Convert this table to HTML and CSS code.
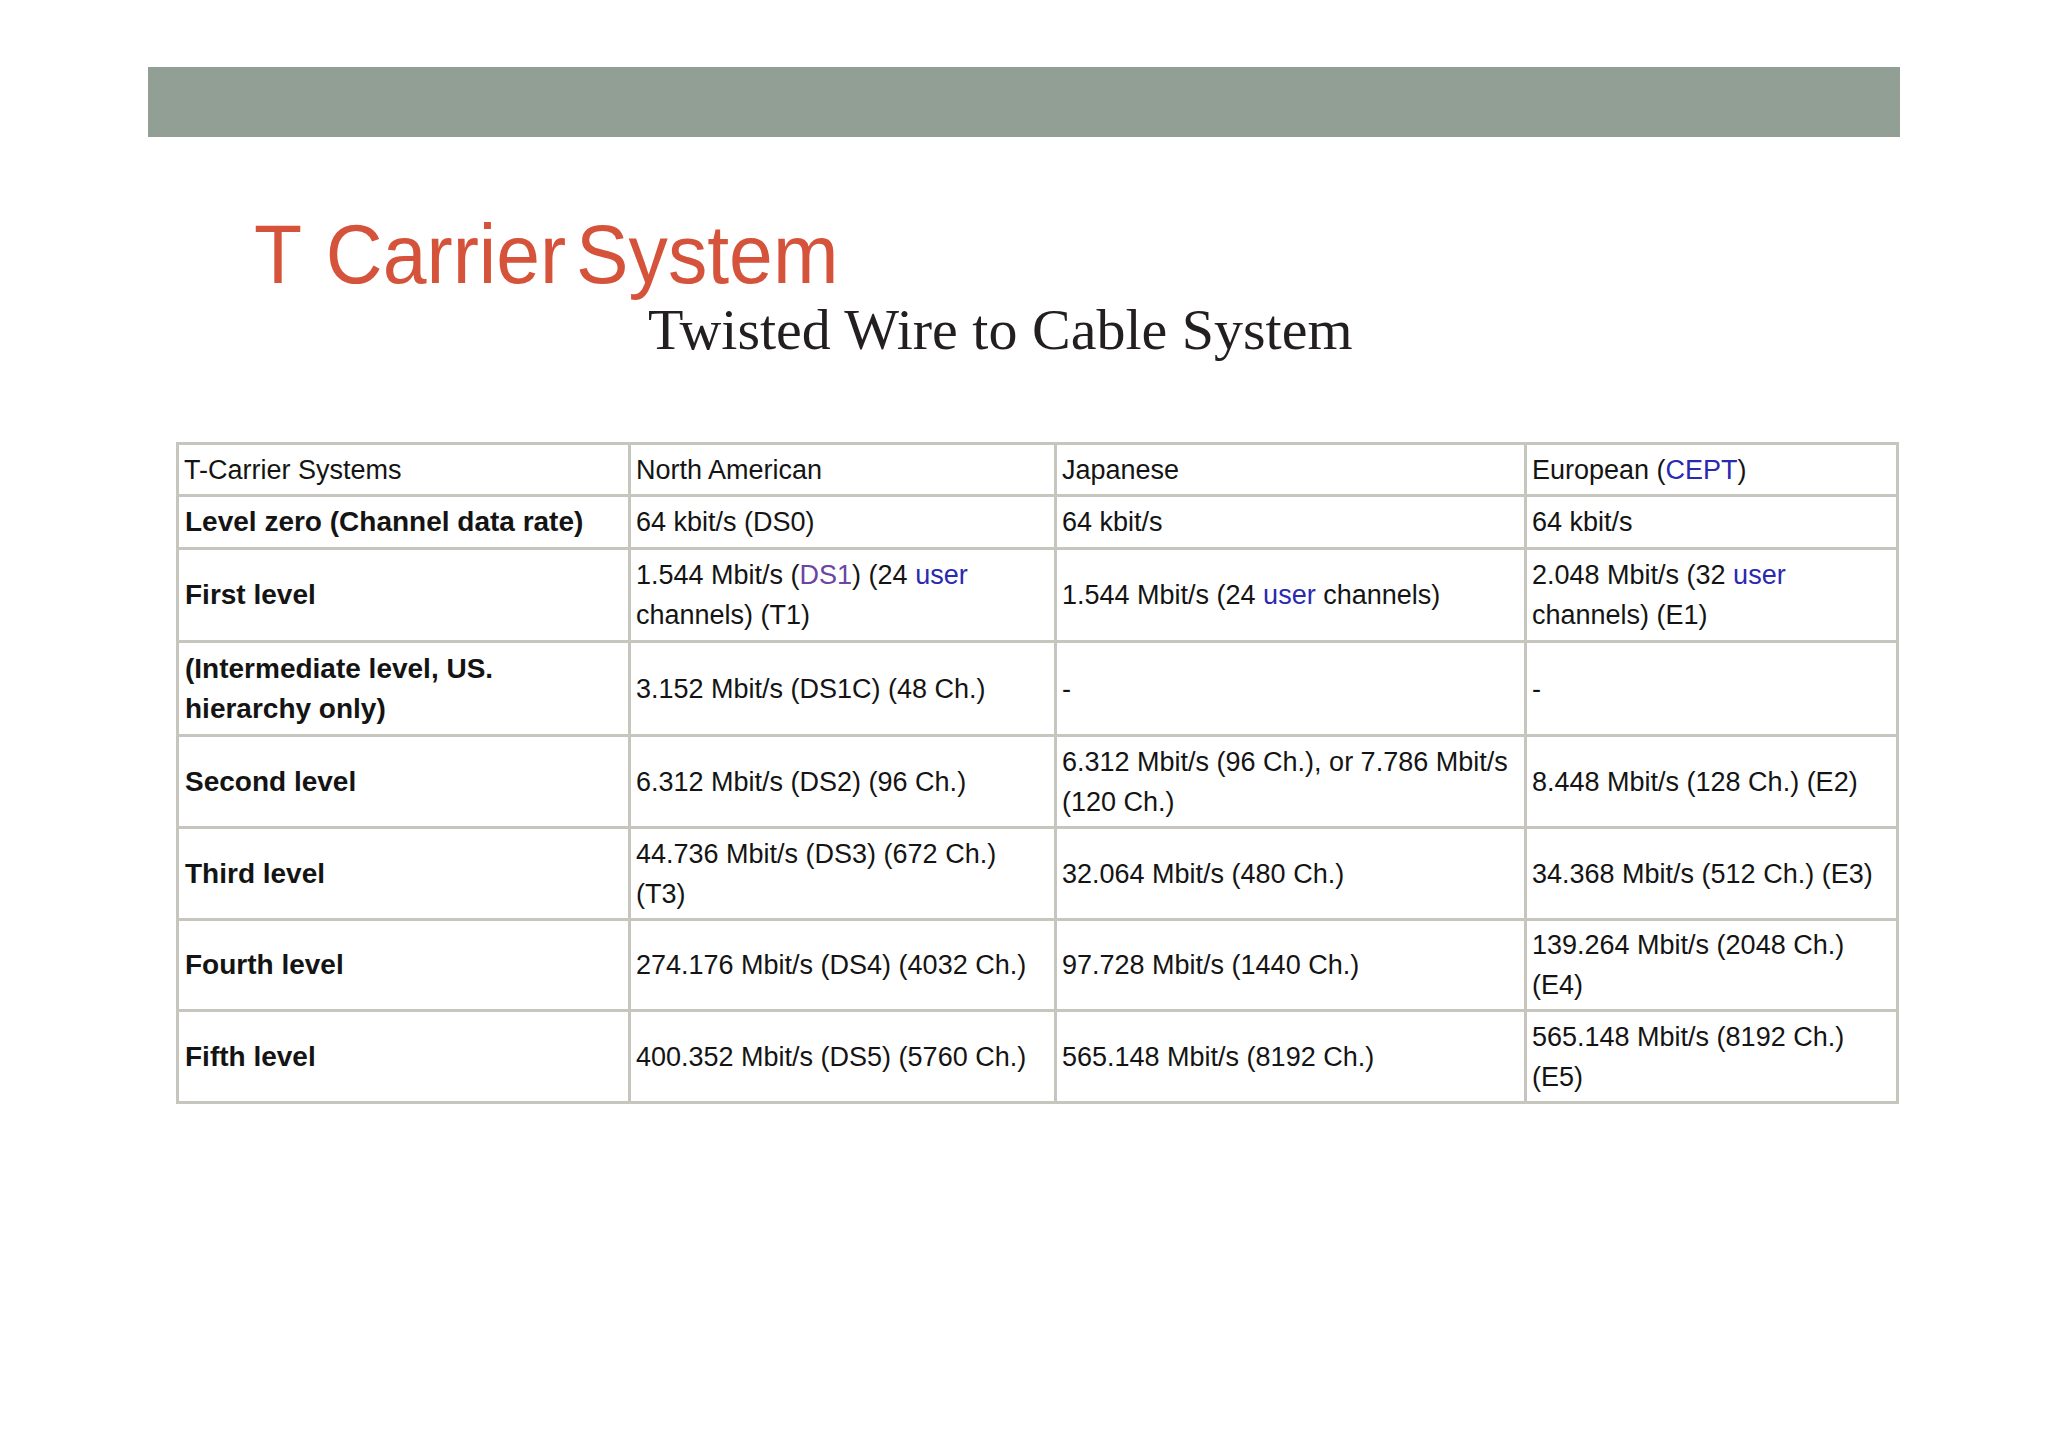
FILE: index.html
```html
<!DOCTYPE html>
<html lang="en">
<head>
<meta charset="utf-8">
<title>T Carrier System</title>
<link rel="stylesheet" href="styles.css">
</head>
<body>
<div class="slide">
  <div class="bar"></div>
  <div class="title"><span class="title-text">T<span class="gap-wide"> </span>Carrier<span class="gap-tight"> </span>System</span></div>
  <div class="subtitle">Twisted Wire to Cable System</div>
  <table class="tc">
    <colgroup>
      <col class="c1"><col class="c2"><col class="c3"><col class="c4">
    </colgroup>
    <tr class="h52">
      <td>T-Carrier Systems</td>
      <td>North American</td>
      <td>Japanese</td>
      <td>European (<span class="link">CEPT</span>)</td>
    </tr>
    <tr class="h53">
      <td class="lvl">Level zero (Channel data rate)</td>
      <td>64 kbit/s (DS0)</td>
      <td>64 kbit/s</td>
      <td>64 kbit/s</td>
    </tr>
    <tr class="h93">
      <td class="lvl">First level</td>
      <td>1.544 Mbit/s (<span class="visited">DS1</span>) (24 <span class="link">user</span> channels) (T1)</td>
      <td>1.544 Mbit/s (24 <span class="link">user</span> channels)</td>
      <td>2.048 Mbit/s (32 <span class="link">user</span> channels) (E1)</td>
    </tr>
    <tr class="h94">
      <td class="lvl">(Intermediate level, US. hierarchy only)</td>
      <td>3.152 Mbit/s (DS1C) (48 Ch.)</td>
      <td>-</td>
      <td>-</td>
    </tr>
    <tr class="h92">
      <td class="lvl">Second level</td>
      <td>6.312 Mbit/s (DS2) (96 Ch.)</td>
      <td>6.312 Mbit/s (96 Ch.), or 7.786 Mbit/s (120 Ch.)</td>
      <td>8.448 Mbit/s (128 Ch.) (E2)</td>
    </tr>
    <tr class="h92">
      <td class="lvl">Third level</td>
      <td>44.736 Mbit/s (DS3) (672 Ch.) (T3)</td>
      <td>32.064 Mbit/s (480 Ch.)</td>
      <td>34.368 Mbit/s (512 Ch.) (E3)</td>
    </tr>
    <tr class="h91">
      <td class="lvl">Fourth level</td>
      <td>274.176 Mbit/s (DS4) (4032 Ch.)</td>
      <td>97.728 Mbit/s (1440 Ch.)</td>
      <td>139.264 Mbit/s (2048 Ch.) (E4)</td>
    </tr>
    <tr class="h92">
      <td class="lvl">Fifth level</td>
      <td>400.352 Mbit/s (DS5) (5760 Ch.)</td>
      <td>565.148 Mbit/s (8192 Ch.)</td>
      <td>565.148 Mbit/s (8192 Ch.) (E5)</td>
    </tr>
  </table>
</div>
</body>
</html>
```

FILE: styles.css
```css
html, body {
  margin: 0;
  padding: 0;
  background: #ffffff;
}

.slide {
  width: 2048px;
  height: 1447px;
  overflow: hidden;
}

.bar {
  margin: 67px 0 0 148px;
  width: 1752px;
  height: 70px;
  background: #919f95;
}

.title {
  margin-top: 73px;
  padding-left: 254px;
  height: 88px;
  line-height: 88px;
  font-family: "Liberation Sans", Arial, sans-serif;
  font-size: 84px;
  color: #d5533b;
  white-space: nowrap;
}

.title-text {
  display: inline-block;
  transform: scaleX(0.937);
  transform-origin: 0 0;
}

.gap-wide {
  word-spacing: 2px;
}

.gap-tight {
  word-spacing: -13px;
}

.subtitle {
  padding-left: 648px;
  height: 64px;
  line-height: 64px;
  font-family: "Liberation Serif", "Times New Roman", serif;
  font-size: 58px;
  color: #231f20;
  white-space: nowrap;
}

.tc {
  margin: 80px 0 0 176px;
  width: 1720px;
  table-layout: fixed;
  border-collapse: collapse;
  border: 3px solid #b4b4ab;
  font-family: "Liberation Sans", Arial, sans-serif;
  font-size: 27px;
  line-height: 40px;
  color: #141414;
}

.c1 { width: 452px; }
.c2 { width: 426px; }
.c3 { width: 470px; }
.c4 { width: 372px; }

.tc td {
  border: 3px solid #c6c6be;
  padding: 4px 5px 4px 5px;
  vertical-align: middle;
  text-align: left;
}

.tc tr.h52 { height: 52px; }
.tc tr.h53 { height: 53px; }
.tc tr.h91 { height: 91px; }
.tc tr.h92 { height: 92px; }
.tc tr.h93 { height: 93px; }
.tc tr.h94 { height: 94px; }

.tc td.lvl {
  font-weight: bold;
  font-size: 28px;
  padding-left: 6px;
}

.link {
  color: #2a2ab0;
}

.visited {
  color: #6a45a3;
}
```
